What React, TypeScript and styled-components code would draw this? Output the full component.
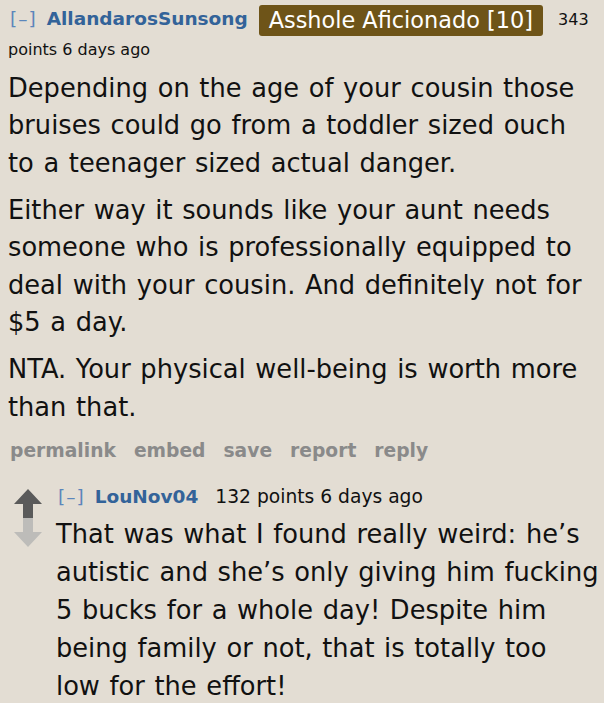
import React from 'react';
import styled, { createGlobalStyle } from 'styled-components';

const GlobalStyle = createGlobalStyle`
  html, body {
    margin: 0;
    padding: 0;
    background: #e3ddd3;
  }
  body {
    font-family: 'DejaVu Sans', Verdana, sans-serif;
    color: #111;
  }
`;

const Page = styled.div`
  width: 604px;
  height: 703px;
  overflow: hidden;
  padding: 4px 4.5px 0 8px;
  box-sizing: border-box;
`;

// 留言外框
const Comment = styled.div`
  display: flex;
  flex-direction: column;
`;

const Tagline = styled.div<{ $meta: number }>`
  font-size: ${(p) => p.$meta}px;
  line-height: 30px;
  color: #111;
`;

const Toggle = styled.span`
  font-size: 18.5px;
  letter-spacing: 1px;
  color: #5b86bb;
  margin-left: 2px;
  margin-right: 10px;
`;

const Author = styled.span`
  font-size: 18.5px;
  color: #336399;
  font-weight: bold;
  margin-right: 11px;
`;

const Flair = styled.span`
  display: inline-block;
  background: #6e5418;
  color: #fff;
  font-size: 22.4px;
  line-height: 31px;
  padding: 0 10px;
  border-radius: 3px;
  margin: 1px 10px -1px 0;
  vertical-align: top;
`;

// 分數與時間，各自一段，換行時不會拼成一個大框
const Meta = styled.span`
  white-space: nowrap;
`;

const Body = styled.div<{ $top: number; $lh: number }>`
  margin-top: ${(p) => p.$top}px;
  font-size: 25.7px;
  word-spacing: 1.5px;
  line-height: ${(p) => p.$lh}px;

  p {
    margin: 0 0 9.5px;
  }
`;

const Actions = styled.ul`
  display: flex;
  gap: 18px;
  list-style: none;
  margin: 0;
  padding: 0 0 0 2px;
  font-size: 18.7px;
  font-weight: bold;
  color: #8a8a8a;
  line-height: 30px;
`;

const Child = styled.div`
  display: flex;
  gap: 8px;
  margin-top: 16.5px;
`;

const Votes = styled.div`
  display: flex;
  flex-direction: column;
  align-items: center;
  width: 40px;
  padding-top: 7px;
  flex-shrink: 0;
`;

const ChildBody = styled.div`
  flex: 1;
  min-width: 0;
`;

const Arrow: React.FC<{ down?: boolean; color: string }> = ({ down, color }) => (
  <svg width="28" height="29" viewBox="0 0 28 29" style={{ transform: down ? 'scaleY(-1)' : undefined }}>
    <path d="M14 0 L28 15 L19 15 L19 29 L9 29 L9 15 L0 15 Z" fill={color} />
  </svg>
);

const App: React.FC = () => {
  return (
    <>
      <GlobalStyle />
      <Page>
        <Comment>
          <Tagline $meta={16}>
            <Toggle>[–]</Toggle>
            <Author>AllandarosSunsong</Author>
            <Flair>Asshole Aficionado [10]</Flair> <Meta>343</Meta> <Meta>points 6 days ago</Meta>
          </Tagline>
          <Body $top={4.5} $lh={37.5}>
            <p>Depending on the age of your cousin those bruises could go from a toddler sized ouch to a teenager sized actual danger.</p>
            <p>Either way it sounds like your aunt needs someone who is professionally equipped to deal with your cousin. And definitely not for $5 a day.</p>
            <p>NTA. Your physical well-being is worth more than that.</p>
          </Body>
          <Actions>
            <li>permalink</li>
            <li>embed</li>
            <li>save</li>
            <li>report</li>
            <li>reply</li>
          </Actions>
          <Child>
            <Votes>
              <Arrow color="#5a5a5a" />
              <Arrow down color="#bdbcb9" />
            </Votes>
            <ChildBody>
              <Tagline $meta={18.7}>
                <Toggle>[–]</Toggle>
                <Author>LouNov04</Author> <Meta>132 points 6 days ago</Meta>
              </Tagline>
              <Body $top={3} $lh={38}>
                <p>That was what I found really weird: he’s autistic and she’s only giving him fucking 5 bucks for a whole day! Despite him being family or not, that is totally too low for the effort!</p>
              </Body>
            </ChildBody>
          </Child>
        </Comment>
      </Page>
    </>
  );
};

export default App;
